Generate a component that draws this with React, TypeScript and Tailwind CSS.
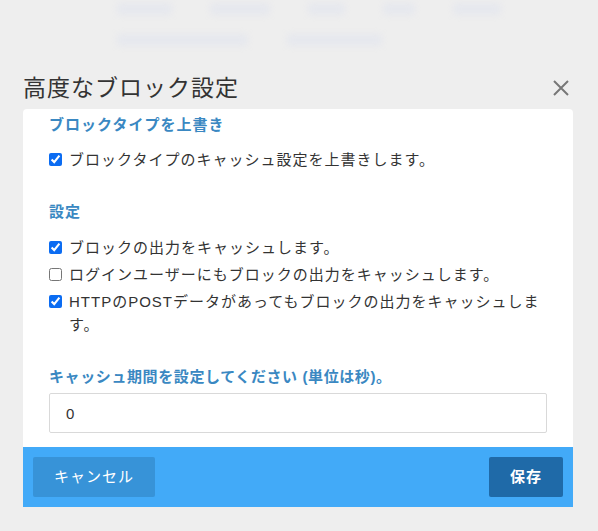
import React from "react";

const FONT = { fontFamily: '"Liberation Sans", "Noto Sans CJK JP", sans-serif' };

function Check({ checked, children }: { checked: boolean; children: React.ReactNode }) {
  return (
    <label className="flex items-start gap-[7px] text-[15px] leading-[23px] tracking-[1px] text-[#333]">
      <input
        type="checkbox"
        defaultChecked={checked}
        className="mt-[5px] h-[13px] w-[13px] shrink-0 accent-[#0b6cf2]"
      />
      <span>{children}</span>
    </label>
  );
}

function Blur({ w }: { w: string }) {
  return <div className={`h-[12px] rounded-sm bg-[#e6e8ee] blur-[3px] ${w}`} />;
}

export default function App() {
  return (
    <div className="h-[531px] w-[598px] overflow-hidden bg-[#eeeeee]" style={FONT}>
      {/* faded page behind the dialog */}
      <div className="h-[67px] pl-[117px] pt-[3px]">
        <div className="flex gap-[38px]">
          <Blur w="w-[55px]" />
          <Blur w="w-[60px]" />
          <Blur w="w-[37px]" />
          <Blur w="w-[32px]" />
          <Blur w="w-[48px]" />
        </div>
        <div className="mt-[19px] flex gap-[39px]">
          <Blur w="w-[131px]" />
          <Blur w="w-[95px]" />
        </div>
      </div>

      <div className="mx-[23px] w-[550px]">
        <div className="flex h-[42px] items-center justify-between pr-[4px]">
          <h1 className="text-[23px] leading-none tracking-[1px] text-[#333]">高度なブロック設定</h1>
          <svg width="16" height="16" viewBox="0 0 16 16" className="text-[#777]">
            <path d="M1 1 L15 15 M15 1 L1 15" stroke="currentColor" strokeWidth="2" />
          </svg>
        </div>

        <div className="rounded-t-[4px] bg-white px-[26px] pb-[14px] pt-[5px]">
          <h2 className="text-[15px] font-bold leading-[22px] tracking-[1px] text-[#3a88c2]">ブロックタイプを上書き</h2>
          <div className="mt-[12px]">
            <Check checked>ブロックタイプのキャッシュ設定を上書きします。</Check>
          </div>

          <h2 className="mt-[30px] text-[15px] font-bold leading-[22px] tracking-[1px] text-[#3a88c2]">設定</h2>
          <div className="mt-[13px] flex flex-col gap-[4px]">
            <Check checked>ブロックの出力をキャッシュします。</Check>
            <Check checked={false}>ログインユーザーにもブロックの出力をキャッシュします。</Check>
            <Check checked>HTTPのPOSTデータがあってもブロックの出力をキャッシュします。</Check>
          </div>

          <h2 className="mt-[30px] text-[15px] font-bold leading-[22px] tracking-[0.6px] text-[#3a88c2]">
            キャッシュ期間を設定してください (単位は秒)。
          </h2>
          <input
            defaultValue="0"
            className="mt-[5px] h-[40px] w-full rounded-[2px] border border-[#d9d9d9] px-[16px] text-[15px] text-[#333] outline-none"
          />
        </div>

        <div className="flex h-[60px] items-center justify-between bg-[#42aaf8] px-[10px]">
          <button className="h-[40px] w-[122px] rounded-[2px] bg-[#3793d8] text-[15px] tracking-[1px] text-white">
            キャンセル
          </button>
          <button className="h-[40px] w-[74px] rounded-[2px] bg-[#1f6aa8] text-[15px] font-bold tracking-[1px] text-white">
            保存
          </button>
        </div>
      </div>
    </div>
  );
}
